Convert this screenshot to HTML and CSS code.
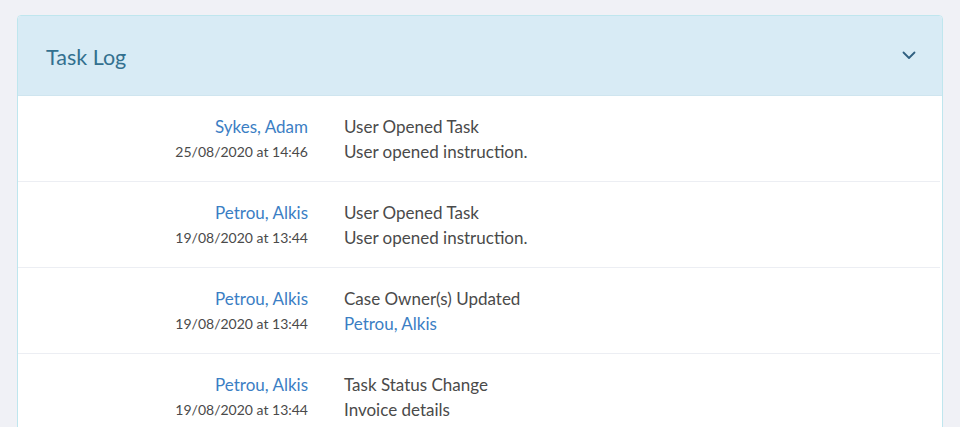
FILE: index.html
```html
<!DOCTYPE html>
<html>
<head>
<meta charset="utf-8">
<link rel="stylesheet" href="styles.css">
</head>
<body>
<div class="panel">
  <div class="panel-header">
    <h2 class="panel-title">Task Log</h2>
    <svg class="chevron" width="14" height="9" viewBox="0 0 14 9"><path d="M1.5 1.5 L7 7 L12.5 1.5" fill="none" stroke="#2f5f80" stroke-width="1.8" stroke-linecap="round" stroke-linejoin="round"/></svg>
  </div>
  <div class="log">
    <div class="entry">
      <div class="meta"><a class="user">Sykes, Adam</a><span class="date">25/08/2020 at 14:46</span></div>
      <div class="detail"><span class="event">User Opened Task</span><span class="desc">User opened instruction.</span></div>
    </div>
    <div class="entry">
      <div class="meta"><a class="user">Petrou, Alkis</a><span class="date">19/08/2020 at 13:44</span></div>
      <div class="detail"><span class="event">User Opened Task</span><span class="desc">User opened instruction.</span></div>
    </div>
    <div class="entry">
      <div class="meta"><a class="user">Petrou, Alkis</a><span class="date">19/08/2020 at 13:44</span></div>
      <div class="detail"><span class="event">Case Owner(s) Updated</span><a class="desc link">Petrou, Alkis</a></div>
    </div>
    <div class="entry">
      <div class="meta"><a class="user">Petrou, Alkis</a><span class="date">19/08/2020 at 13:44</span></div>
      <div class="detail"><span class="event">Task Status Change</span><span class="desc">Invoice details</span></div>
    </div>
  </div>
</div>
</body>
</html>
```
FILE: styles.css
```css
html, body {
  margin: 0;
  padding: 0;
  background: #f0f1f6;
  font-family: Lato, "Open Sans", sans-serif;
  overflow: hidden;
}
body {
  padding: 15px 17px;
  height: 427px;
  box-sizing: border-box;
}
.panel {
  border: 1px solid #bfe6ee;
  border-radius: 4px;
  background: #fff;
  min-height: 500px;
}
.panel-header {
  background: #d8ebf5;
  height: 79px;
  border-bottom: 1px solid #cfe5ef;
  border-radius: 3px 3px 0 0;
  display: flex;
  align-items: center;
  justify-content: space-between;
  padding: 0 26px 0 28px;
}
.panel-title {
  margin: 0;
  font-weight: 400;
  font-size: 21.5px;
  color: #33708f;
  padding-top: 2px;
}
.chevron {
  display: block;
  margin-top: -1px;
}
.entry {
  display: flex;
  gap: 36px;
  padding: 18px 0 17px;
  border-bottom: 1px solid #eceef3;
  margin-right: 2px;
}
.meta {
  width: 290px;
  display: flex;
  flex-direction: column;
  align-items: flex-end;
}
.detail {
  display: flex;
  flex-direction: column;
}
.user, .link {
  color: #3b7ec4;
  font-size: 17px;
  line-height: 25px;
}
.date {
  color: #4a4a4a;
  font-size: 14px;
  line-height: 25px;
}
.event, .desc {
  color: #4a4a4a;
  font-size: 17px;
  line-height: 25px;
}
.desc.link {
  color: #3b7ec4;
}
```
